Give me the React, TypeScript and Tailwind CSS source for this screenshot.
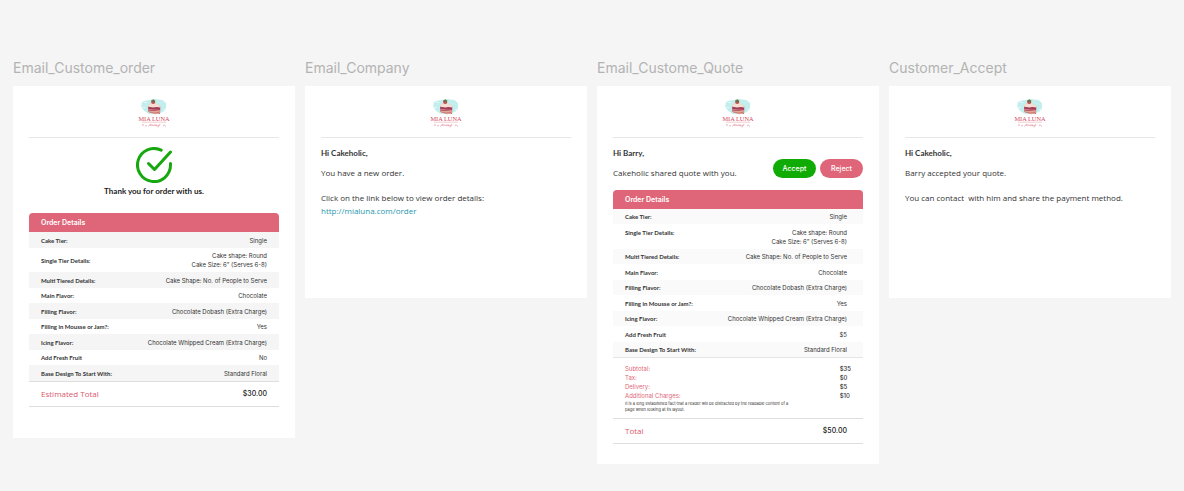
import type { ReactNode } from "react";

type Row = { label: string; values: string[] };

const baseRows: Row[] = [
  { label: "Cake Tier:", values: ["Single"] },
  { label: "Single Tier Details:", values: ["Cake shape: Round", "Cake Size: 6” (Serves 6-8)"] },
  { label: "Multi Tiered Details:", values: ["Cake Shape: No. of People to Serve"] },
  { label: "Main Flavor:", values: ["Chocolate"] },
  { label: "Filling Flavor:", values: ["Chocolate Dobash (Extra Charge)"] },
  { label: "Filling in Mousse or Jam?:", values: ["Yes"] },
  { label: "Icing Flavor:", values: ["Chocolate Whipped Cream (Extra Charge)"] },
];

const orderRows: Row[] = [
  ...baseRows,
  { label: "Add Fresh Fruit", values: ["No"] },
  { label: "Base Design To Start With:", values: ["Standard Floral"] },
];

const quoteRows: Row[] = [
  ...baseRows,
  { label: "Add Fresh Fruit", values: ["$5"] },
  { label: "Base Design To Start With:", values: ["Standard Floral"] },
];

const charges = [
  ["Subtotal:", "$35"],
  ["Tax:", "$0"],
  ["Delivery:", "$5"],
  ["Additional Charges:", "$10"],
];

function Logo() {
  return (
    <svg viewBox="0 0 32 30" className="h-[30px] w-8" role="img" aria-label="Mia Luna">
      <path
        d="M4 4 8 2.600l4-.6L16 1l5 .4 4 .8 3 3 .2 4.200-2.500 4-4.200 2.200-6 .5-5-.3-3.500-2.400L4.200 10.500l-1-2z"
        fill="#c3eeee"
      />
      <path d="M6 4.500h3M25 12h3M4 9.500h3" stroke="#e2f8f8" strokeWidth="1.200" />
      <path d="M10 7.500 14.500 4.500l7 3.200.8 1-.3 7.300-11.500-2z" fill="#a23d58" />
      <path d="M9.800 7 15 3.900l7.600 4-.2 1.700-4-.6-3 .4-5.200-.6z" fill="#f6ddd2" />
      <path d="M10.600 11.400 22 12.400" stroke="#d9808a" strokeWidth=".9" />
      <path d="m10.700 12.500 6 .6 5.200-.9-.1 3.300-4.600.8-6.300-1.700z" fill="#e3a994" />
      <path d="m11.500 14 5 1 4.600-.8" fill="none" stroke="#b95c66" strokeWidth=".6" />
      <circle cx="15.200" cy="4" r="2.100" fill="#b8534a" />
      <path d="m12.800 2.200 1.500.4.900-1.900.7 1.700 1.600-.3-1.200 1.500-2.200.2z" fill="#59793d" />
      <text
        x="16"
        y="22.500"
        textAnchor="middle"
        fontSize="6.300"
        fontWeight="500"
        fill="#cf4a60"
        fontFamily="Liberation Serif, serif"
      >
        MIA LUNA
      </text>
      <path d="M4 24.200h24" stroke="#e9a9b3" strokeWidth=".6" />
      <path
        d="M4.500 27.500c0-2 1.500-1 .6.300M7 27.800l2-.2M10.500 28.500c2-3 2.500-3 1.500-.8 1.500-1.500 2-1 1.700.1 1-1.200 1.600-1.200 1.500 0 1.300-1.800 1.900-.8 1.500.2 1.600-2.500 2-1.500 1.300.2 1-1 2-1.500 1.700 0 1.500-.7 2-2.500 2.300-1.700-1 1.500-1.500 2.500-2 3M25.500 27c1.500-.6 1.500 1-.5.700M27 28.200h1"
        fill="none"
        stroke="#e08a98"
        strokeWidth=".6"
      />
    </svg>
  );
}

function Frame({ title, className, children }: { title: string; className: string; children: ReactNode }) {
  return (
    <section className="min-w-0">
      <h2 className="pb-2 font-['Inter',sans-serif] text-[14px] leading-5 whitespace-nowrap text-[#b3b3b3]">
        {title}
      </h2>
      <article className={`bg-white px-4 ${className}`}>
        <header className="flex justify-center border-b border-[#e6e6e6] pt-3 pb-[9px]">
          <Logo />
        </header>
        {children}
      </article>
    </section>
  );
}

function DetailsTable({ rows, quote = false }: { rows: Row[]; quote?: boolean }) {
  const stripe = quote ? "odd:bg-[#fafafa] even:*:pt-1" : "odd:bg-[#f5f5f5] odd:*:pt-1";
  const align = quote ? "align-top" : "align-middle";
  const edge = quote ? "pr-4" : "pr-3";
  return (
    <table className="w-full border-separate border-spacing-0 text-[6px] leading-[9px]">
      <thead>
        <tr>
          <th
            colSpan={2}
            className="rounded-t bg-[#df6678] px-3 py-[5px] text-left font-['Inter',sans-serif] text-[7px] font-semibold text-white"
          >
            Order Details
          </th>
        </tr>
      </thead>
      <tbody>
        {rows.map((row) => (
          <tr key={row.label} className={stripe}>
            <th
              scope="row"
              className={`py-[3px] pl-3 text-left font-['Lato',sans-serif] font-bold whitespace-nowrap ${align}`}
            >
              {row.label}
            </th>
            <td className={`py-[3px] text-right font-['Inter',sans-serif] whitespace-nowrap ${edge}`}>
              {row.values.map((value) => (
                <div key={value}>{value}</div>
              ))}
            </td>
          </tr>
        ))}
      </tbody>
    </table>
  );
}

function Total({ label, amount, edge }: { label: string; amount: string; edge: string }) {
  return (
    <div
      className={`flex items-center justify-between border-y border-[#dedede] py-[6px] pl-3 leading-3 ${edge}`}
    >
      <span className="text-[#d9586c]">{label}</span>
      <span className="font-['Inter',sans-serif] text-[7px] font-medium text-[#222]">{amount}</span>
    </div>
  );
}

export default function App() {
  return (
    <main className="grid min-h-screen grid-cols-4 items-start gap-[10px] bg-[#f5f5f5] px-[13px] pt-[58px] pb-7 font-['Open_Sans',sans-serif] text-[8px] leading-[13px] text-[#333]">
      <Frame title="Email_Custome_order" className="pb-[31px]">
        <div className="flex flex-col items-center pt-[9px] pb-[15px]">
          <svg viewBox="0 0 36 36" className="h-9 w-9" fill="none" stroke="#17a80f" strokeWidth="3" aria-hidden="true">
            <path d="M25.200 3.200A16.500 16.500 0 1 0 34.500 18v-1.500" strokeLinecap="round" />
            <path d="m12.500 16.500 6 6L34.500 5" strokeLinecap="round" strokeLinejoin="round" />
          </svg>
          <p className="mt-[2px] font-['Lato',sans-serif] font-bold text-[#222]">Thank you for order with us.</p>
        </div>
        <DetailsTable rows={orderRows} />
        <Total label="Estimated Total" amount="$30.00" edge="pr-3" />
      </Frame>

      <Frame title="Email_Company" className="pb-[81px]">
        <div className="pt-[9px]">
          <p className="font-['Lato',sans-serif] font-bold">Hi Cakeholic,</p>
          <p className="mt-[6px]">You have a new order.</p>
          <p className="mt-3">Click on the link below to view order details:</p>
          <a href="http://mialuna.com/order" className="block text-[#2596ad]">
            http://mialuna.com/order
          </a>
        </div>
      </Frame>

      <Frame title="Email_Custome_Quote" className="pb-5">
        <div className="flex items-end justify-between pt-[9px] pb-[11px]">
          <div>
            <p className="font-['Lato',sans-serif] font-bold">Hi Barry,</p>
            <p className="mt-[6px]">Cakeholic shared quote with you.</p>
          </div>
          <div className="flex gap-1 pb-px font-['Inter',sans-serif] text-[7px] font-medium text-white">
            <button type="button" className="w-[43px] rounded-full bg-[#10ac05] py-[3px]">
              Accept
            </button>
            <button type="button" className="w-[43px] rounded-full bg-[#df6678] py-[3px]">
              Reject
            </button>
          </div>
        </div>
        <DetailsTable rows={quoteRows} quote />
        <div className="border-t border-[#e6e6e6] px-3 pt-[6px] pb-[5px] font-['Inter',sans-serif]">
          <table className="w-full text-[6px] leading-[9px]">
            <tbody>
              {charges.map(([label, amount]) => (
                <tr key={label}>
                  <th scope="row" className="text-left font-normal text-[#df6678]">
                    {label}
                  </th>
                  <td className="w-[10px] font-medium">{amount}</td>
                </tr>
              ))}
            </tbody>
          </table>
          <p className="mt-px w-3/4 text-[4px] leading-[6px]">
            It is a long established fact that a reader will be distracted by the readable content of a page when
            looking at its layout.
          </p>
        </div>
        <Total label="Total" amount="$50.00" edge="pr-4" />
      </Frame>

      <Frame title="Customer_Accept" className="pb-[94px]">
        <div className="pt-[9px]">
          <p className="font-['Lato',sans-serif] font-bold">Hi Cakeholic,</p>
          <p className="mt-[6px]">Barry accepted your quote.</p>
          <p className="mt-3 whitespace-pre-wrap">{"You can contact  with him and share the payment method."}</p>
        </div>
      </Frame>
    </main>
  );
}
